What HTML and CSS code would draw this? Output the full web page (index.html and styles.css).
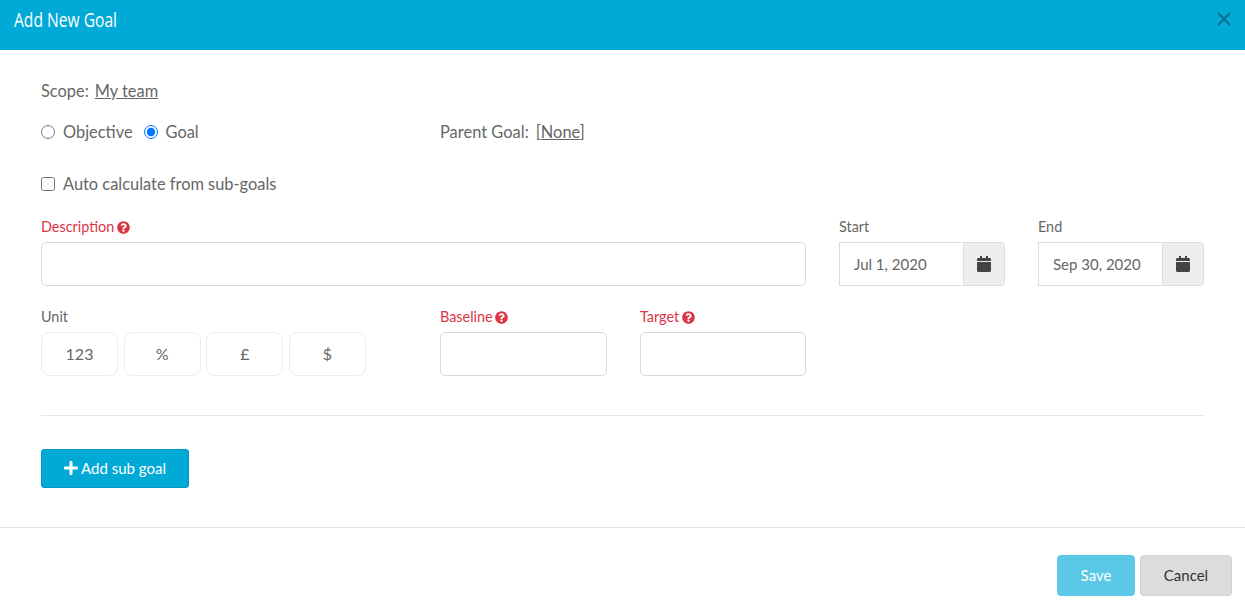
FILE: index.html
```html
<!DOCTYPE html>
<html lang="en">
<head>
<meta charset="utf-8">
<title>Add New Goal</title>
<link rel="stylesheet" href="styles.css">
</head>
<body>
<div class="modal">
  <header class="modal-header">
    <h1 class="modal-title">Add New Goal</h1>
    <button class="close" type="button" aria-label="Close">
      <svg width="14" height="14" viewBox="0 0 14 14"><path d="M1 1l12 12M13 1L1 13" class="close-x"/></svg>
    </button>
  </header>
  <main class="modal-body">
    <div class="scope"><span>Scope:</span><a class="link" href="#">My team</a></div>
    <div class="grid-mid type-row">
      <div class="radios">
        <label class="check"><input type="radio" name="type"><span>Objective</span></label>
        <label class="check"><input type="radio" name="type" checked><span>Goal</span></label>
      </div>
      <div class="parent"><span>Parent Goal:</span><span>[<a class="link" href="#">None</a>]</span></div>
    </div>
    <label class="check auto"><input type="checkbox"><span>Auto calculate from sub-goals</span></label>
    <div class="grid-top">
      <div class="field">
        <label class="lbl req">Description <svg class="help" viewBox="0 0 512 512"><path d="M504 256c0 136.997-111.043 248-248 248S8 392.997 8 256C8 119.083 119.043 8 256 8s248 111.083 248 248zM262.655 90c-54.497 0-89.255 22.957-116.549 63.758-3.536 5.286-2.353 12.415 2.715 16.258l34.699 26.31c5.205 3.947 12.621 3.008 16.665-2.122 17.864-22.658 30.113-35.797 57.303-35.797 20.429 0 45.698 13.148 45.698 32.958 0 14.976-12.363 22.667-32.534 33.976C247.128 238.528 216 254.941 216 296v4c0 6.627 5.373 12 12 12h56c6.627 0 12-5.373 12-12v-1.333c0-28.462 83.186-29.647 83.186-106.667 0-58.002-60.165-102-116.531-102zM256 338c-25.365 0-46 20.635-46 46 0 25.364 20.635 46 46 46s46-20.636 46-46c0-25.365-20.635-46-46-46z"/></svg></label>
        <input class="input" type="text">
      </div>
      <div class="field">
        <label class="lbl">Start</label>
        <div class="date">
          <input class="date-input" type="text" value="Jul 1, 2020">
          <span class="addon"><svg class="cal" viewBox="0 0 448 512"><path d="M12 192h424c6.6 0 12 5.4 12 12v260c0 26.5-21.5 48-48 48H48c-26.5 0-48-21.5-48-48V204c0-6.6 5.4-12 12-12zm436-44v-36c0-26.5-21.5-48-48-48h-48V12c0-6.6-5.4-12-12-12h-40c-6.6 0-12 5.4-12 12v52H160V12c0-6.6-5.4-12-12-12h-40c-6.6 0-12 5.4-12 12v52H48C21.5 64 0 85.5 0 112v36c0 6.6 5.4 12 12 12h424c6.6 0 12-5.4 12-12z"/></svg></span>
        </div>
      </div>
      <div class="field">
        <label class="lbl">End</label>
        <div class="date">
          <input class="date-input" type="text" value="Sep 30, 2020">
          <span class="addon"><svg class="cal" viewBox="0 0 448 512"><path d="M12 192h424c6.6 0 12 5.4 12 12v260c0 26.5-21.5 48-48 48H48c-26.5 0-48-21.5-48-48V204c0-6.6 5.4-12 12-12zm436-44v-36c0-26.5-21.5-48-48-48h-48V12c0-6.6-5.4-12-12-12h-40c-6.6 0-12 5.4-12 12v52H160V12c0-6.6-5.4-12-12-12h-40c-6.6 0-12 5.4-12 12v52H48C21.5 64 0 85.5 0 112v36c0 6.6 5.4 12 12 12h424c6.6 0 12-5.4 12-12z"/></svg></span>
        </div>
      </div>
    </div>
    <div class="grid-mid values">
      <div class="field">
        <label class="lbl">Unit</label>
        <div class="units">
          <button class="unit" type="button">123</button>
          <button class="unit" type="button">%</button>
          <button class="unit" type="button">£</button>
          <button class="unit" type="button">$</button>
        </div>
      </div>
      <div class="field">
        <label class="lbl req">Baseline <svg class="help" viewBox="0 0 512 512"><path d="M504 256c0 136.997-111.043 248-248 248S8 392.997 8 256C8 119.083 119.043 8 256 8s248 111.083 248 248zM262.655 90c-54.497 0-89.255 22.957-116.549 63.758-3.536 5.286-2.353 12.415 2.715 16.258l34.699 26.31c5.205 3.947 12.621 3.008 16.665-2.122 17.864-22.658 30.113-35.797 57.303-35.797 20.429 0 45.698 13.148 45.698 32.958 0 14.976-12.363 22.667-32.534 33.976C247.128 238.528 216 254.941 216 296v4c0 6.627 5.373 12 12 12h56c6.627 0 12-5.373 12-12v-1.333c0-28.462 83.186-29.647 83.186-106.667 0-58.002-60.165-102-116.531-102zM256 338c-25.365 0-46 20.635-46 46 0 25.364 20.635 46 46 46s46-20.636 46-46c0-25.365-20.635-46-46-46z"/></svg></label>
        <input class="input" type="text">
      </div>
      <div class="field">
        <label class="lbl req">Target <svg class="help" viewBox="0 0 512 512"><path d="M504 256c0 136.997-111.043 248-248 248S8 392.997 8 256C8 119.083 119.043 8 256 8s248 111.083 248 248zM262.655 90c-54.497 0-89.255 22.957-116.549 63.758-3.536 5.286-2.353 12.415 2.715 16.258l34.699 26.31c5.205 3.947 12.621 3.008 16.665-2.122 17.864-22.658 30.113-35.797 57.303-35.797 20.429 0 45.698 13.148 45.698 32.958 0 14.976-12.363 22.667-32.534 33.976C247.128 238.528 216 254.941 216 296v4c0 6.627 5.373 12 12 12h56c6.627 0 12-5.373 12-12v-1.333c0-28.462 83.186-29.647 83.186-106.667 0-58.002-60.165-102-116.531-102zM256 338c-25.365 0-46 20.635-46 46 0 25.364 20.635 46 46 46s46-20.636 46-46c0-25.365-20.635-46-46-46z"/></svg></label>
        <input class="input" type="text">
      </div>
    </div>
    <hr class="rule">
    <button class="btn-add" type="button"><svg class="plus" viewBox="0 0 448 512"><path d="M416 208H272V64c0-17.67-14.33-32-32-32h-32c-17.67 0-32 14.33-32 32v144H32c-17.67 0-32 14.33-32 32v32c0 17.67 14.33 32 32 32h144v144c0 17.67 14.33 32 32 32h32c17.67 0 32-14.33 32-32V304h144c17.67 0 32-14.33 32-32v-32c0-17.67-14.33-32-32-32z"/></svg>Add sub goal</button>
  </main>
  <footer class="modal-footer">
    <button class="btn btn-save" type="button">Save</button>
    <button class="btn btn-cancel" type="button">Cancel</button>
  </footer>
</div>
</body>
</html>
```
FILE: styles.css
```css
* { box-sizing: border-box; }
html, body { margin: 0; padding: 0; background: #fff; }
body {
  font-family: Lato, "Liberation Sans", sans-serif;
  font-size: 16.4px;
  color: #666;
  height: 612px;
  overflow: hidden;
}
.modal { display: flex; flex-direction: column; }
.modal-header {
  height: 50px;
  background: #00a9d6;
  display: flex;
  align-items: center;
  justify-content: space-between;
  padding: 0 14px 0 13.5px;
}
.modal-title {
  margin: 0 0 10px;
  font-family: "Open Sans", sans-serif;
  font-size: 20px;
  font-weight: 400;
  line-height: 24px;
  color: #fff;
  transform: scaleX(0.78);
  transform-origin: left center;
}
.close {
  border: 0;
  background: none;
  padding: 0;
  display: flex;
  margin-bottom: 12px;
}
.close-x { stroke: #0b708f; stroke-width: 2; fill: none; }
.modal-body {
  height: 478px;
  padding: 30px 40px 0 41px;
  border-bottom: 1px solid #e2e2e2;
}
.scope {
  display: flex;
  gap: 6px;
  height: 22px;
  line-height: 22px;
}
.link { color: #666; text-decoration: underline; }
.grid-mid {
  display: grid;
  grid-template-columns: 366px 167px 166px;
  column-gap: 33px;
}
.type-row { margin-top: 19px; height: 22px; line-height: 22px; }
.radios { display: flex; gap: 11px; }
.check { display: flex; align-items: center; gap: 8px; line-height: 22px; }
.check input { margin: 0; width: 14px; height: 14px; accent-color: #0075ff; }
.parent { display: flex; gap: 7px; letter-spacing: 0.03px; }
.auto { margin-top: 30px; }
.grid-top {
  display: grid;
  grid-template-columns: 765px 166px 166px;
  column-gap: 33px;
  margin-top: 21px;
  height: 80px;
}
.values { margin-top: 10px; }
.field { display: flex; flex-direction: column; }
.lbl {
  height: 26px;
  font-size: 14.4px;
  line-height: 20px;
  padding-top: 2px;
  display: block;
  margin-top: -1px;
  margin-bottom: 1px;
}
.req { color: #dc3545; }
.help { width: 13px; height: 13px; fill: #dc3545; vertical-align: -1.5px; margin-left: -1px; }
.input {
  height: 44px;
  width: 100%;
  border: 1px solid #d9d9d9;
  border-radius: 5px;
  background: #fff;
  padding: 0 14px;
  outline: none;
}
.date { display: flex; height: 44px; }
.date-input {
  width: 124px;
  height: 44px;
  border: 1px solid #dedede;
  border-right: 0;
  padding: 0 14px;
  font: inherit;
  font-size: 15px;
  color: #666;
  background: #fff;
  outline: none;
}
.addon {
  width: 42px;
  background: #eee;
  border: 1px solid #dedede;
  border-radius: 0 4px 4px 0;
  display: flex;
  align-items: center;
  justify-content: center;
}
.cal { width: 14px; height: 16px; fill: #444; }
.units { display: flex; gap: 5.67px; }
.unit {
  width: 77px;
  height: 44px;
  background: #fff;
  border: 1px solid #ececec;
  border-radius: 8px;
  font: inherit;
  font-size: 16px;
  color: #666;
  padding: 0 0 2px;
}
.rule {
  border: 0;
  border-top: 1px solid #e8e8e8;
  margin: 39px 0 33px;
}
.btn-add {
  width: 148px;
  height: 39px;
  background: #00a9d6;
  border: 1px solid #0098c2;
  border-radius: 3px;
  color: #fff;
  font: inherit;
  font-size: 15px;
  display: flex;
  align-items: center;
  justify-content: center;
  gap: 3px;
  padding: 0 0 2px;
}
.plus { width: 14px; height: 16px; fill: #fff; }
.modal-footer {
  display: flex;
  justify-content: flex-end;
  gap: 5px;
  padding: 27px 13px 0 0;
}
.btn {
  height: 41px;
  border-radius: 4px;
  font: inherit;
  font-size: 15px;
  padding: 0 0 2px;
}
.btn-save { width: 78px; background: #5ac8e6; border: 1px solid #5ac8e6; color: #fff; }
.btn-cancel { width: 92px; background: #dcdcdc; border: 1px solid #d2d2d2; color: #333; }
```
